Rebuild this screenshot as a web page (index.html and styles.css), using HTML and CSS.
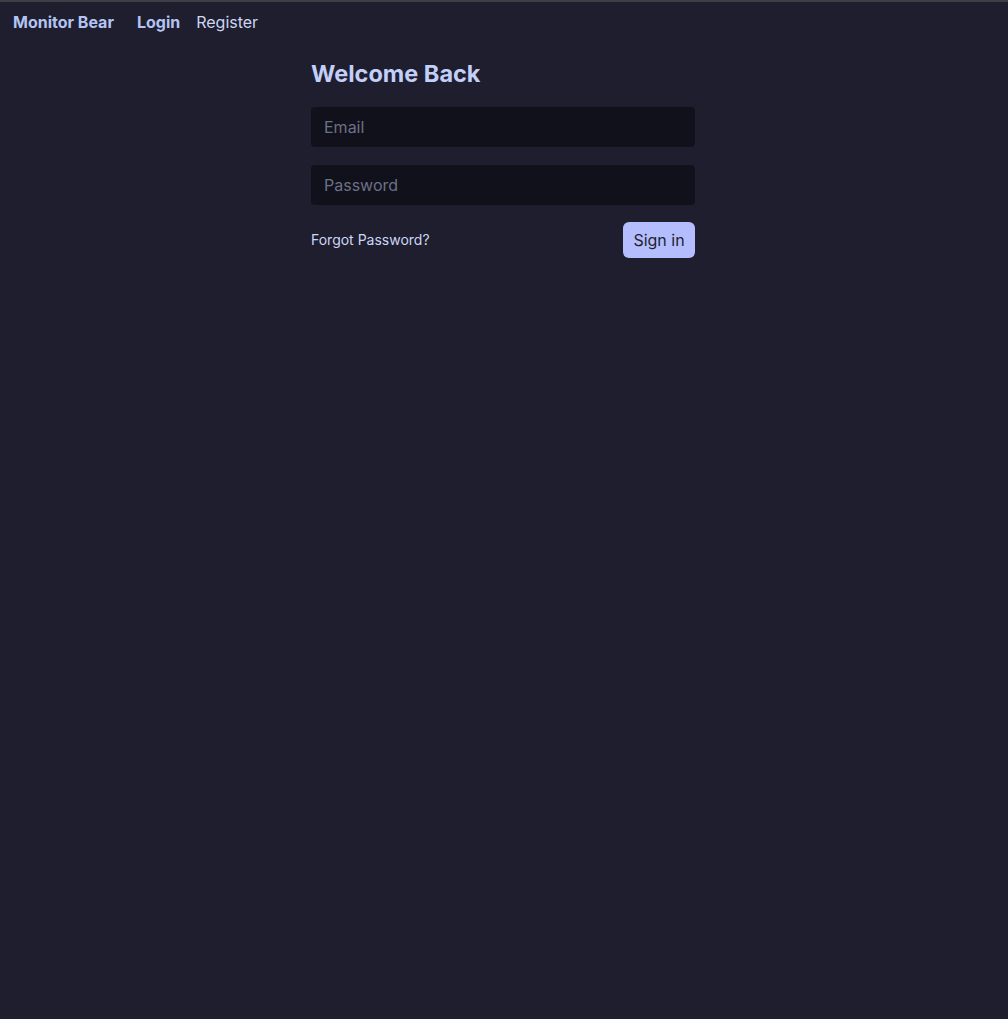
FILE: index.html
```html
<!DOCTYPE html>
<html lang="en">
<head>
<meta charset="utf-8">
<title>Monitor Bear</title>
<link rel="stylesheet" href="styles.css">
</head>
<body>
<nav class="nav">
  <a class="brand" href="#">Monitor Bear</a>
  <a class="nav-link active" href="#">Login</a>
  <a class="nav-link" href="#">Register</a>
</nav>
<main class="main">
  <form class="login">
    <h1 class="title">Welcome Back</h1>
    <input class="field" type="email" placeholder="Email">
    <input class="field" type="password" placeholder="Password">
    <div class="actions">
      <a class="forgot" href="#">Forgot Password?</a>
      <button class="btn" type="button">Sign in</button>
    </div>
  </form>
</main>
</body>
</html>
```
FILE: styles.css
```css
html, body {
  margin: 0;
  padding: 0;
  height: 100%;
}
body {
  background: #1e1e2e;
  border-top: 2px solid #3e3e46;
  box-sizing: border-box;
  font-family: Inter, "Noto Sans", sans-serif;
  color: #cdd6f4;
}
.nav {
  display: flex;
  align-items: center;
  height: 40px;
  padding: 0 13px;
  font-size: 16px;
}
.nav a {
  text-decoration: none;
  color: #cdd6f4;
}
.brand {
  font-weight: 700;
  color: #b4c4f4 !important;
  margin-right: 23px;
}
.nav-link {
  margin-right: 16px;
}
.nav-link.active {
  font-weight: 700;
  color: #b4c4f4 !important;
}
.main {
  display: flex;
  justify-content: center;
}
.login {
  width: 384px;
  display: flex;
  flex-direction: column;
  margin-right: 2px;
}
.title {
  margin: 16px 0 17px;
  font-size: 23.5px;
  line-height: 32px;
  font-weight: 700;
  color: #c3cff8;
}
.field {
  height: 40px;
  box-sizing: border-box;
  background: #11111b;
  border: none;
  border-radius: 4px;
  padding: 0 13px;
  font-family: inherit;
  font-size: 16px;
  color: #cdd6f4;
  margin-bottom: 18px;
  outline: none;
}
.field::placeholder {
  color: #6c7086;
}
.actions {
  display: flex;
  justify-content: space-between;
  align-items: center;
  margin-top: -1px;
}
.forgot {
  font-size: 14px;
  color: #cdd6f4;
  text-decoration: none;
  margin-top: -1px;
}
.btn {
  height: 36px;
  width: 72px;
  border: none;
  border-radius: 6px;
  background: #b4befe;
  color: #1e1e2e;
  font-family: inherit;
  font-size: 16px;
  cursor: pointer;
}
```
